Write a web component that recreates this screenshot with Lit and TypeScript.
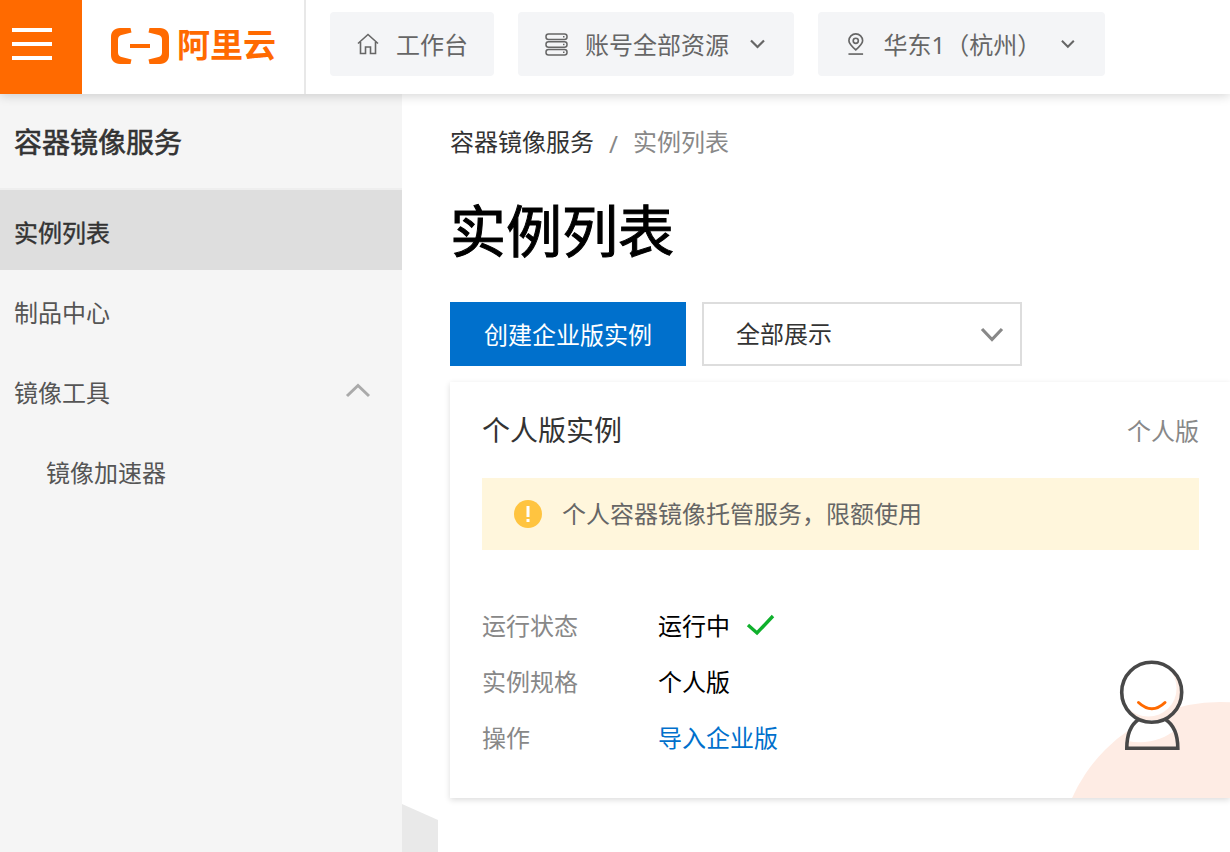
import { LitElement, html, css } from "lit";
import { customElement } from "lit/decorators.js";

const chevron = html`<svg class="chev" width="15" height="10" viewBox="0 0 15 10"><path d="M1 1.500l6.500 6.500L14 1.500" fill="none" stroke="#666" stroke-width="2.200"/></svg>`;

@customElement("app-root")
export class AppRoot extends LitElement {
  static styles = css`
    :host {
      display: block;
      width: 1230px;
      height: 852px;
      overflow: hidden;
      position: relative;
      background: #fff;
      font-family: "Noto Sans", "Noto Sans CJK SC", sans-serif;
      color: #333;
    }
    * { box-sizing: border-box; }
    header {
      position: relative;
      z-index: 2;
      height: 94px;
      display: flex;
      align-items: flex-start;
      background: #fff;
      box-shadow: 0 2px 10px rgba(0, 0, 0, 0.16);
    }
    .burger {
      width: 82px;
      height: 94px;
      background: #ff6a00;
      display: flex;
      flex-direction: column;
      justify-content: center;
      gap: 10px;
      padding: 0 0 6px 12px;
    }
    .burger i { display: block; width: 40px; height: 4px; background: #fff; }
    .logo {
      width: 224px;
      height: 94px;
      border-right: 2px solid #e8e8e8;
      display: flex;
      align-items: center;
      padding: 0 0 3px 29px;
      gap: 8px;
      color: #ff6a00;
      font-size: 33px;
      font-weight: 700;
      line-height: 1;
    }
    .logo span { padding-bottom: 2px; }
    .nav { display: flex; gap: 24px; margin: 12px 0 0 24px; }
    .nav-btn {
      height: 64px;
      display: flex;
      align-items: center;
      background: #f4f5f7;
      border-radius: 4px;
      font-size: 24px;
      color: #666;
      white-space: nowrap;
    }
    .nav-btn span { padding-bottom: 2px; }
    .b1 { width: 164px; padding-left: 27px; gap: 17px; }
    .b2 { width: 276px; padding-left: 27px; gap: 17px; }
    .b3 { width: 287px; padding-left: 30px; gap: 20px; }
    .b2 .chev { margin-left: 4px; }
    .b3 .chev { margin-left: auto; margin-right: 30px; }
    .body { display: flex; height: 758px; }
    aside { width: 402px; background: #f5f5f5; flex: none; }
    .side-title {
      height: 96px;
      display: flex;
      align-items: center;
      padding-left: 14px;
      font-size: 28px;
      font-weight: 400;
      -webkit-text-stroke: 0.6px #333;
      color: #333;
      border-bottom: 2px solid #eee;
    }
    .item {
      height: 80px;
      display: flex;
      align-items: center;
      justify-content: space-between;
      padding: 2px 31px 0 14px;
      font-size: 24px;
      color: #555;
    }
    .item svg { margin-top: -2px; }
    .item.active { background: #dedede; color: #333; -webkit-text-stroke: 0.4px #333; }
    .item.sub { padding-left: 46px; }
    main { flex: 1; padding-left: 48px; min-width: 0; }
    .crumb {
      display: flex;
      align-items: center;
      height: 36px;
      margin-top: 30px;
      font-size: 24px;
      color: #333;
      line-height: 36px;
    }
    .crumb .sep { margin: 0 15px; color: #888; padding-top: 4px; }
    .crumb .cur { color: #888; }
    h1 {
      margin: 29px 0 0 0;
      font-size: 56px;
      line-height: 82px;
      font-weight: 400;
      -webkit-text-stroke: 1px #000;
      color: #000;
      height: 82px;
    }
    .actions { display: flex; gap: 16px; margin-top: 31px; }
    .primary {
      width: 236px;
      height: 64px;
      background: #0070cc;
      color: #fff;
      font-size: 24px;
      display: flex;
      align-items: center;
      justify-content: center;
      padding-bottom: 2px;
    }
    .select {
      width: 320px;
      height: 64px;
      border: 2px solid #ddd;
      background: #fff;
      display: flex;
      align-items: center;
      justify-content: space-between;
      padding: 0 16px 0 32px;
      font-size: 24px;
      color: #333;
    }
    .select span { padding-bottom: 3px; }
    .select svg { margin-top: 2px; }
    .card {
      position: relative;
      margin-top: 16px;
      width: 780px;
      height: 416px;
      background: #fff;
      box-shadow: 0 2px 6px rgba(0, 0, 0, 0.14);
      padding: 0 31px 0 32px;
      overflow: hidden;
    }
    .card-head {
      height: 96px;
      display: flex;
      align-items: center;
      justify-content: space-between;
      padding-bottom: 2px;
      font-size: 28px;
      color: #333;
    }
    .card-head span:last-child { font-size: 24px; color: #888; }
    .alert {
      height: 72px;
      background: #fff6dc;
      display: flex;
      align-items: center;
      gap: 20px;
      padding-left: 32px;
      font-size: 24px;
      color: #666;
    }
    .alert span { padding-bottom: 3px; }
    .rows {
      margin-top: 46px;
      display: grid;
      grid-template-columns: 176px 1fr;
      grid-auto-rows: 56px;
      font-size: 24px;
      align-items: center;
      position: relative;
      z-index: 1;
    }
    .rows .k { color: #888; }
    .rows .v { color: #000; display: flex; align-items: center; gap: 16px; }
    .rows .v svg { margin-top: 2px; }
    .rows a { color: #0070cc; text-decoration: none; }
    .blob {
      position: absolute;
      left: 608px;
      top: 320px;
      width: 324px;
      height: 324px;
      border-radius: 50%;
      background: #feece4;
    }
    .robot { position: absolute; left: 668px; top: 276px; }
    .tab { position: absolute; left: 402px; top: 804px; }
  `;

  render() {
    return html`
      <header>
        <div class="burger"><i></i><i></i><i></i></div>
        <div class="logo">
          <svg width="58" height="36" viewBox="0 0 58 36" fill="#ff6a00">
            <path d="M19.500 0H9C3.500 0 0 3.500 0 9v18c0 5.500 3.500 9 9 9h10.500l1-4.500-10-2.500c-2-.6-3.500-2-3.500-4.500V11.500C7 9 8.500 7.600 10.500 7l10-2.500z"/>
            <path d="M38.500 0H49c5.500 0 9 3.500 9 9v18c0 5.500-3.500 9-9 9H38.500l-1-4.500 10-2.500c2-.6 3.500-2 3.500-4.500V11.500C51 9 49.500 7.600 47.500 7l-10-2.500z"/>
            <rect x="19" y="16" width="20" height="4"/>
          </svg>
          <span>阿里云</span>
        </div>
        <div class="nav">
          <div class="nav-btn b1">
            <svg width="22" height="22" viewBox="0 0 22 22" fill="none" stroke="#666" stroke-width="1.600"><path d="M1 10.500L11 1.500l10 9M3.500 9v11.500h5V14h5v6.500h5V9"/></svg>
            <span>工作台</span>
          </div>
          <div class="nav-btn b2">
            <svg width="23" height="23" viewBox="0 0 23 23" fill="none" stroke="#666" stroke-width="1.500"><rect x="1" y="1" width="21" height="5.500" rx="2.500"/><rect x="1" y="8.800" width="21" height="5.500" rx="2.500"/><rect x="1" y="16.600" width="21" height="5.500" rx="2.500"/><path d="M18 3.700h1.500M18 11.500h1.500M18 19.300h1.500"/></svg>
            <span>账号全部资源</span>
            ${chevron}
          </div>
          <div class="nav-btn b3">
            <svg width="17" height="24" viewBox="0 0 17 24" fill="none" stroke="#666" stroke-width="1.800"><path d="M8.500 18.500C4 14.500 1 11.500 1 8.500a7.500 7.500 0 0 1 15 0c0 3-3 6-7.500 10z"/><circle cx="8.500" cy="8.500" r="2.800"/><path d="M0.500 23h16"/></svg>
            <span>华东1（杭州）</span>
            ${chevron}
          </div>
        </div>
      </header>
      <div class="body">
        <aside>
          <div class="side-title">容器镜像服务</div>
          <div class="item active">实例列表</div>
          <div class="item">制品中心</div>
          <div class="item">
            <span>镜像工具</span>
            <svg width="26" height="15" viewBox="0 0 26 15"><path d="M2 13L13 2.500 24 13" fill="none" stroke="#aaa" stroke-width="3"/></svg>
          </div>
          <div class="item sub">镜像加速器</div>
        </aside>
        <main>
          <div class="crumb"><span>容器镜像服务</span><span class="sep">/</span><span class="cur">实例列表</span></div>
          <h1>实例列表</h1>
          <div class="actions">
            <div class="primary">创建企业版实例</div>
            <div class="select">
              <span>全部展示</span>
              <svg width="24" height="16" viewBox="0 0 24 16"><path d="M2 2l10 10.500L22 2" fill="none" stroke="#888" stroke-width="3.200"/></svg>
            </div>
          </div>
          <section class="card">
            <div class="blob"></div>
            <div class="card-head"><span>个人版实例</span><span>个人版</span></div>
            <div class="alert">
              <svg width="28" height="28" viewBox="0 0 28 28"><circle cx="14" cy="14" r="14" fill="#ffc440"/><rect x="12.500" y="6" width="3" height="11" fill="#fff"/><rect x="12.500" y="19" width="3" height="3" fill="#fff"/></svg>
              <span>个人容器镜像托管服务，限额使用</span>
            </div>
            <div class="rows">
              <div class="k">运行状态</div>
              <div class="v"><span>运行中</span><svg width="29" height="22" viewBox="0 0 29 22"><path d="M2 11l9 8L27 2" fill="none" stroke="#0fb02c" stroke-width="3.400"/></svg></div>
              <div class="k">实例规格</div>
              <div class="v">个人版</div>
              <div class="k">操作</div>
              <div class="v"><a>导入企业版</a></div>
            </div>
            <svg class="robot" width="68" height="94" viewBox="0 0 68 94">
              <circle cx="33.700" cy="34.300" r="30" fill="#feece4"/>
              <circle cx="30.300" cy="30.300" r="28.300" fill="#fff"/>
              <path d="M9 90c0-13 4-22 12-28h26c8 6 12.500 15 12.500 28z" fill="#feece4"/>
              <path d="M9.500 83c1-9 5-16 11.500-21h26c4 3 7.500 6 10 10C48 80 30 87 9.500 83z" fill="#fff"/>
              <circle cx="33.700" cy="34.300" r="30" fill="none" stroke="#484848" stroke-width="3.600"/>
              <path d="M20.500 44.500Q34 57 47 44.500" fill="none" stroke="#ff6a00" stroke-width="3" stroke-linecap="round"/>
              <path d="M20.500 61.500C12.500 67 8.800 77 8.800 90.300h51C59.800 77 56 67 47.500 61.500" fill="none" stroke="#484848" stroke-width="3.600"/>
            </svg>
          </section>
        </main>
      </div>
      <svg class="tab" width="36" height="48" viewBox="0 0 36 48"><path d="M0 0L36 16V48H0z" fill="#e9e9e9"/></svg>
    `;
  }
}
